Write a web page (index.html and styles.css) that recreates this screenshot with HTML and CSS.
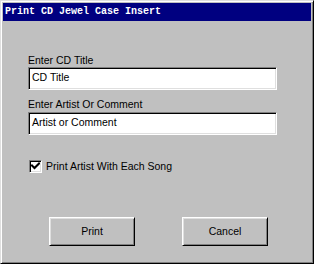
FILE: index.html
```html
<!DOCTYPE html>
<html>
<head>
<meta charset="utf-8">
<link rel="stylesheet" href="styles.css">
</head>
<body>
<div class="window">
  <div class="titlebar">Print CD Jewel Case Insert</div>
  <div class="content">
    <div class="field">
      <div class="label">Enter CD Title</div>
      <div class="input">CD Title</div>
    </div>
    <div class="field second">
      <div class="label">Enter Artist Or Comment</div>
      <div class="input">Artist or Comment</div>
    </div>
    <div class="check">
      <span class="box"><svg width="9" height="9" viewBox="0 0 9 9"><path d="M1 3.5 L3.5 6 L8 1.5" fill="none" stroke="#000" stroke-width="2" stroke-linecap="square"/></svg></span>
      <span class="check-label">Print Artist With Each Song</span>
    </div>
    <div class="buttons">
      <div class="btn"><span>Print</span></div>
      <div class="btn"><span>Cancel</span></div>
    </div>
  </div>
</div>
</body>
</html>
```
FILE: styles.css
```css
html, body {
  margin: 0;
  padding: 0;
  background: #c0c0c0;
}
.window {
  width: 314px;
  height: 264px;
  box-sizing: border-box;
  background: #c0c0c0;
  border: 1px solid;
  border-color: #dfdfdf #000 #000 #dfdfdf;
  box-shadow: inset 1px 1px #fff, inset -1px -1px #808080;
  padding: 2px;
  display: flex;
  flex-direction: column;
  font-family: "Liberation Sans", Arial, sans-serif;
  font-size: 10.5px;
  line-height: 13px;
  color: #000;
}
.titlebar {
  height: 18px;
  background: #000080;
  color: #fff;
  font-family: "Liberation Mono", "Courier New", monospace;
  font-weight: bold;
  font-size: 10px;
  line-height: 18px;
  padding-left: 2px;
  white-space: nowrap;
}
.content {
  display: flex;
  flex-direction: column;
  padding: 33px 34px 0 25px;
}
.field {
  display: flex;
  flex-direction: column;
}
.field.second {
  margin-top: 8px;
}
.label {
  height: 13px;
}
.field.second .label {
  height: 14px;
}
.input {
  height: 23px;
  box-sizing: border-box;
  background: #fff;
  border: 1px solid;
  border-color: #808080 #fff #fff #808080;
  box-shadow: inset 1px 1px #000, inset -1px -1px #dfdfdf;
  padding: 3px 0 0 3px;
}
.check {
  display: flex;
  align-items: center;
  margin-top: 25px;
  margin-left: 1px;
  height: 13px;
}
.box {
  width: 13px;
  height: 13px;
  box-sizing: border-box;
  background: #fff;
  border: 1px solid;
  border-color: #808080 #fff #fff #808080;
  box-shadow: inset 1px 1px #000, inset -1px -1px #dfdfdf;
  display: flex;
  align-items: center;
  justify-content: center;
}
.box svg {
  display: block;
}
.check-label {
  margin-left: 4px;
}
.buttons {
  display: flex;
  gap: 47px;
  margin-top: 44px;
  margin-left: 21px;
}
.btn {
  width: 86px;
  height: 29px;
  box-sizing: border-box;
  border: 1px solid;
  border-color: #fff #000 #000 #fff;
  box-shadow: inset 1px 1px #dfdfdf, inset -1px -1px #808080;
  display: flex;
  align-items: center;
  justify-content: center;
}
```
